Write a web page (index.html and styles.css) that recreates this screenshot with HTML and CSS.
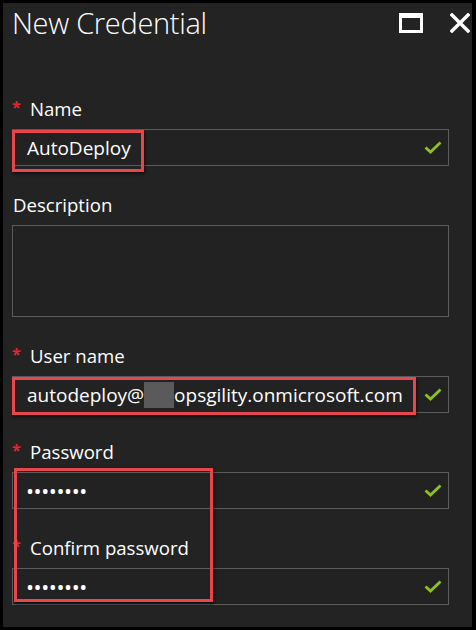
FILE: index.html
```html
<!DOCTYPE html>
<html lang="en">
<head>
<meta charset="utf-8">
<title>New Credential</title>
<link rel="stylesheet" href="styles.css">
</head>
<body>
<div class="panel">
  <header class="header">
    <h1 class="title">New Credential</h1>
    <button class="icon-btn max" aria-label="Maximize">
      <svg width="24" height="20" viewBox="0 0 24 20"><rect x="1.5" y="2.5" width="21" height="16" fill="none" stroke="#fff" stroke-width="3"/><rect x="0" y="0" width="24" height="5" fill="#fff"/></svg>
    </button>
    <button class="icon-btn close" aria-label="Close">
      <svg width="20" height="20" viewBox="0 0 20 20"><path d="M2 2 L18 18 M18 2 L2 18" stroke="#fff" stroke-width="3.4" stroke-linecap="square"/></svg>
    </button>
  </header>

  <form class="form">
    <div class="field">
      <div class="label"><span class="req">*</span>Name</div>
      <div class="input"><span class="value">AutoDeploy</span><svg class="check" width="18" height="13" viewBox="0 0 18 13"><path d="M1.5 6.5 L6.5 11 L16.5 1.5" fill="none" stroke="#8cc21e" stroke-width="2.8"/></svg></div>
      <div class="mark mark-name"></div>
    </div>

    <div class="field">
      <div class="label plain">Description</div>
      <div class="input textarea"></div>
    </div>

    <div class="field">
      <div class="label"><span class="req">*</span>User name</div>
      <div class="input"><span class="value">autodeploy@<span class="blur"></span>opsgility.onmicrosoft.com</span><svg class="check" width="18" height="13" viewBox="0 0 18 13"><path d="M1.5 6.5 L6.5 11 L16.5 1.5" fill="none" stroke="#8cc21e" stroke-width="2.8"/></svg></div>
      <div class="mark mark-user"></div>
    </div>

    <div class="field">
      <div class="label"><span class="req">*</span>Password</div>
      <div class="input"><span class="value dots">••••••••</span><svg class="check" width="18" height="13" viewBox="0 0 18 13"><path d="M1.5 6.5 L6.5 11 L16.5 1.5" fill="none" stroke="#8cc21e" stroke-width="2.8"/></svg></div>
      <div class="mark mark-pass"></div>
    </div>

    <div class="field">
      <div class="label"><span class="req">*</span>Confirm password</div>
      <div class="input"><span class="value dots">••••••••</span><svg class="check" width="18" height="13" viewBox="0 0 18 13"><path d="M1.5 6.5 L6.5 11 L16.5 1.5" fill="none" stroke="#8cc21e" stroke-width="2.8"/></svg></div>
    </div>
  </form>
</div>
</body>
</html>
```

FILE: styles.css
```css
* { box-sizing: border-box; }

html, body {
  margin: 0;
  padding: 0;
  background: #000;
}

body {
  width: 476px;
  height: 630px;
  overflow: hidden;
  font-family: "Open Sans", "Noto Sans", sans-serif;
  color: #fff;
}

.panel {
  position: relative;
  width: 469px;
  height: 624px;
  margin: 3px;
  padding: 2px 0 0 9px;
  background: #232323;
}

.header {
  display: flex;
  align-items: center;
  height: 36px;
  padding-right: 2px;
}

.title {
  flex: 1;
  margin: 0;
  font-size: 29px;
  font-weight: 300;
  line-height: 36px;
  letter-spacing: -0.3px;
  color: #fff;
}

.icon-btn {
  display: flex;
  padding: 0;
  border: 0;
  background: none;
}

.icon-btn.max { margin-right: 27px; }

.form {
  display: flex;
  flex-direction: column;
  gap: 29px;
  margin: 58px 0 0;
  padding-right: 23px;
}

.field {
  position: relative;
  display: flex;
  flex-direction: column;
}

.label {
  display: flex;
  height: 20px;
  margin-bottom: 10px;
  font-size: 18.6px;
  line-height: 20px;
  color: #fff;
}

.label.plain { padding-left: 1px; }

.req {
  width: 18px;
  margin-top: 2px;
  font-size: 16px;
  font-weight: 700;
  line-height: 12px;
  color: #e0252e;
}

.input {
  display: flex;
  align-items: center;
  justify-content: space-between;
  height: 37px;
  padding: 0 6px 0 14px;
  border: 1px solid #5c5c5c;
  background: #222;
  font-size: 19px;
  color: #fff;
}

.input.textarea { height: 92px; }

.value {
  display: flex;
  align-items: center;
  white-space: nowrap;
}

.blur {
  display: inline-block;
  width: 30px;
  height: 26px;
  background: #5a5a5a;
}

.dots {
  font-size: 16px;
  font-weight: 700;
  letter-spacing: 1.6px;
}

.check { flex: none; }

/* red annotation boxes drawn over the form */
.mark {
  position: absolute;
  z-index: 2;
  border: 3px solid #e8464d;
  box-shadow: 1px 2px 3px rgba(0, 0, 0, 0.6);
  pointer-events: none;
}

.mark-name {
  left: 0;
  top: 31px;
  width: 132px;
  height: 42px;
}

.mark-user {
  left: 0;
  top: 31px;
  width: 404px;
  height: 38px;
}

.mark-pass {
  left: 2px;
  top: 26px;
  width: 199px;
  height: 134px;
}
```
